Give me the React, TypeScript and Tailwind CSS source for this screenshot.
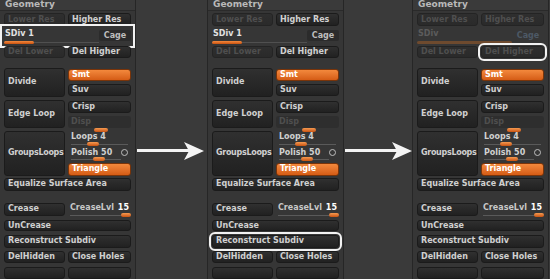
import type { ReactNode } from 'react'

type BtnProps = {
  label?: ReactNode
  dim?: boolean
  orange?: boolean
  className?: string
  children?: ReactNode
}

function Btn({ label, dim, orange, className = '', children }: BtnProps) {
  const skin = orange
    ? 'bg-gradient-to-b from-[#f3893c] to-[#d55c14] border-[#7a3409] text-white'
    : dim
      ? 'bg-gradient-to-b from-[#2f2f2f] to-[#2a2a2a] border-[#242424] text-[#4f4f4f]'
      : 'bg-gradient-to-b from-[#303030] to-[#212121] border-[#1b1b1b] text-[#d0d0d0]'
  return (
    <div className={`flex items-center rounded-[3px] border px-[3px] text-[8px] leading-none whitespace-nowrap overflow-hidden ${skin} ${className}`}>
      {label}
      {children}
    </div>
  )
}

function Track({ knob, w = 12, className = '' }: { knob: number; w?: number; className?: string }) {
  return (
    <div className={`relative h-[1px] bg-[#5a5a5a] ${className}`}>
      <div
        className="absolute top-[-2px] h-[4px] rounded-full bg-gradient-to-b from-[#f59a50] to-[#c8520c]"
        style={{ left: knob, width: w }}
      />
    </div>
  )
}

function Panel({ v }: { v: 1 | 2 | 3 }) {
  const p3 = v === 3
  return (
    <div className="w-[137px] shrink-0 h-full bg-[#363636] border-x border-[#262626] flex flex-col px-[4px]">
      <div className="h-[11px] -mx-[4px] px-[5px] flex items-center text-[9px] text-[#b9b9b9] bg-[#3a3a3a] border-b border-[#2a2a2a]">
        Geometry
      </div>

      <div className="mt-[2px] flex gap-[3px] h-[14px]">
        <Btn label="Lower Res" dim className="w-[61px]" />
        <Btn label="Higher Res" dim={p3} className="flex-1" />
      </div>

      <div
        className={`mt-[2px] h-[16px] flex items-start ${v === 1 ? 'outline-2 outline-offset-2 outline-[#f2f2f2]' : ''}`}
      >
        <div className="flex-1 flex flex-col pt-[2px]">
          <div className={`h-[9px] px-[1px] text-[8px] leading-none ${p3 ? 'text-[#5c5c5c]' : 'text-[#e2e2e2]'}`}>
            {p3 ? 'SDiv' : 'SDiv 1'}
          </div>
          {p3 ? (
            <div className="mt-[2px] h-[3px] w-[95px] rounded-full bg-[#6e4a2e]" />
          ) : (
            <div className="mt-[2px] relative h-[3px]">
              <div className="absolute top-[1px] left-0 right-0 h-[1px] bg-[#505050]" />
              <div className="absolute top-0 left-0 h-[3px] w-[30px] rounded-full bg-gradient-to-b from-[#f3893c] to-[#c9520d]" />
            </div>
          )}
        </div>
        <div
          className={`mt-[2px] w-[32px] h-[11px] flex items-center justify-center rounded-[2px] text-[8px] leading-none ${p3 ? 'text-[#4d5966]' : 'bg-[#2b2b2b] text-[#bdbdbd]'}`}
        >
          Cage
        </div>
      </div>

      <div className="mt-[2px] flex gap-[3px] h-[13px]">
        <Btn label="Del Lower" dim className="w-[61px]" />
        <Btn
          label="Del Higher"
          dim={p3}
          className={`flex-1 ${p3 ? 'outline-2 outline-offset-1 outline-[#f2f2f2]' : ''}`}
        />
      </div>

      <div className="mt-[10px] flex gap-[3px] h-[30px]">
        <Btn label="Divide" className="w-[61px] px-[2px]" />
        <div className="flex-1 flex flex-col gap-[3px] pt-[1px]">
          <Btn label="Smt" orange className="h-[12px]" />
          <Btn label="Suv" className="h-[12px]" />
        </div>
      </div>

      <div className="mt-[3px] flex gap-[3px] h-[30px]">
        <Btn label="Edge Loop" className="w-[61px] px-[2px]" />
        <div className="flex-1 flex flex-col gap-[3px] pt-[1px]">
          <Btn label="Crisp" className="h-[12px]" />
          <div className="h-[12px] flex flex-col rounded-[3px] bg-[#2e2e2e] px-[3px] pt-[2px]">
            <div className="text-[8px] leading-none text-[#4f4f4f]">Disp</div>
            <Track knob={23} w={14} className="mt-[4px] bg-[#444]" />
          </div>
        </div>
      </div>

      <div className="mt-[3px] flex gap-[3px] h-[45px]">
        <Btn label="GroupsLoops" className="w-[61px] px-[1px] tracking-[-0.3px]" />
        <div className="flex-1 flex flex-col">
          <div className="h-[14px] flex flex-col px-[3px] pt-[2px]">
            <div className="text-[8px] leading-none text-[#d0d0d0]">Loops 4</div>
            <Track knob={16} className="mt-[3px]" />
          </div>
          <div className="mt-[2px] h-[14px] flex flex-col px-[3px] pt-[2px]">
            <div className="flex items-center text-[8px] leading-none text-[#d0d0d0]">
              <span>Polish 50</span>
              <span className="ml-auto w-[7px] h-[7px] rounded-full border-[1.5px] border-[#bdbdbd]" />
            </div>
            <Track knob={22} className="mt-[2px] w-[50px]" />
          </div>
          <Btn label="Triangle" orange className="mt-[2px] h-[13px]" />
        </div>
      </div>

      <Btn label="Equalize Surface Area" className="mt-[2px] h-[14px]" />

      <div className="mt-[12px] flex gap-[3px] h-[13px]">
        <Btn label="Crease" className="w-[61px]" />
        <div className="flex-1 flex flex-col px-[2px] pt-[1px]">
          <div className="flex text-[8px] leading-none text-[#c8c8c8]">
            <span>CreaseLvl</span>
            <span className="ml-auto text-white">15</span>
          </div>
          <Track knob={51} w={10} className="mt-[3px]" />
        </div>
      </div>

      <Btn label="UnCrease" className="mt-[4px] h-[12px]" />
      <Btn
        label="Reconstruct Subdiv"
        className={`mt-[4px] h-[13px] ${v === 2 ? 'outline-2 outline-offset-1 outline-[#f2f2f2]' : ''}`}
      />

      <div className="mt-[3px] flex gap-[3px] h-[13px]">
        <Btn label="DelHidden" className="w-[61px]" />
        <Btn label="Close Holes" className="flex-1" />
      </div>

      <div className="mt-[4px] flex gap-[3px] h-[13px]">
        <Btn className="w-[61px]" />
        <Btn className="flex-1" />
      </div>
    </div>
  )
}

function Arrow() {
  return (
    <svg width="68" height="20" viewBox="0 0 68 20" className="mt-[141px] ml-[1px]">
      <rect x="0" y="8" width="52" height="3" fill="#f4f4f4" />
      <path d="M47 1 L67 10 L47 19 L52 10 Z" fill="#f4f4f4" />
    </svg>
  )
}

export default function App() {
  return (
    <div className="w-[550px] h-[279px] overflow-hidden bg-[#3a3a3a] flex font-['DejaVu_Sans',sans-serif] font-bold">
      <div className="-ml-[1px] flex h-full">
        <Panel v={1} />
      </div>
      <div className="w-[71px] shrink-0 flex flex-col">
        <Arrow />
      </div>
      <Panel v={2} />
      <div className="w-[68px] shrink-0 flex flex-col">
        <Arrow />
      </div>
      <Panel v={3} />
    </div>
  )
}
